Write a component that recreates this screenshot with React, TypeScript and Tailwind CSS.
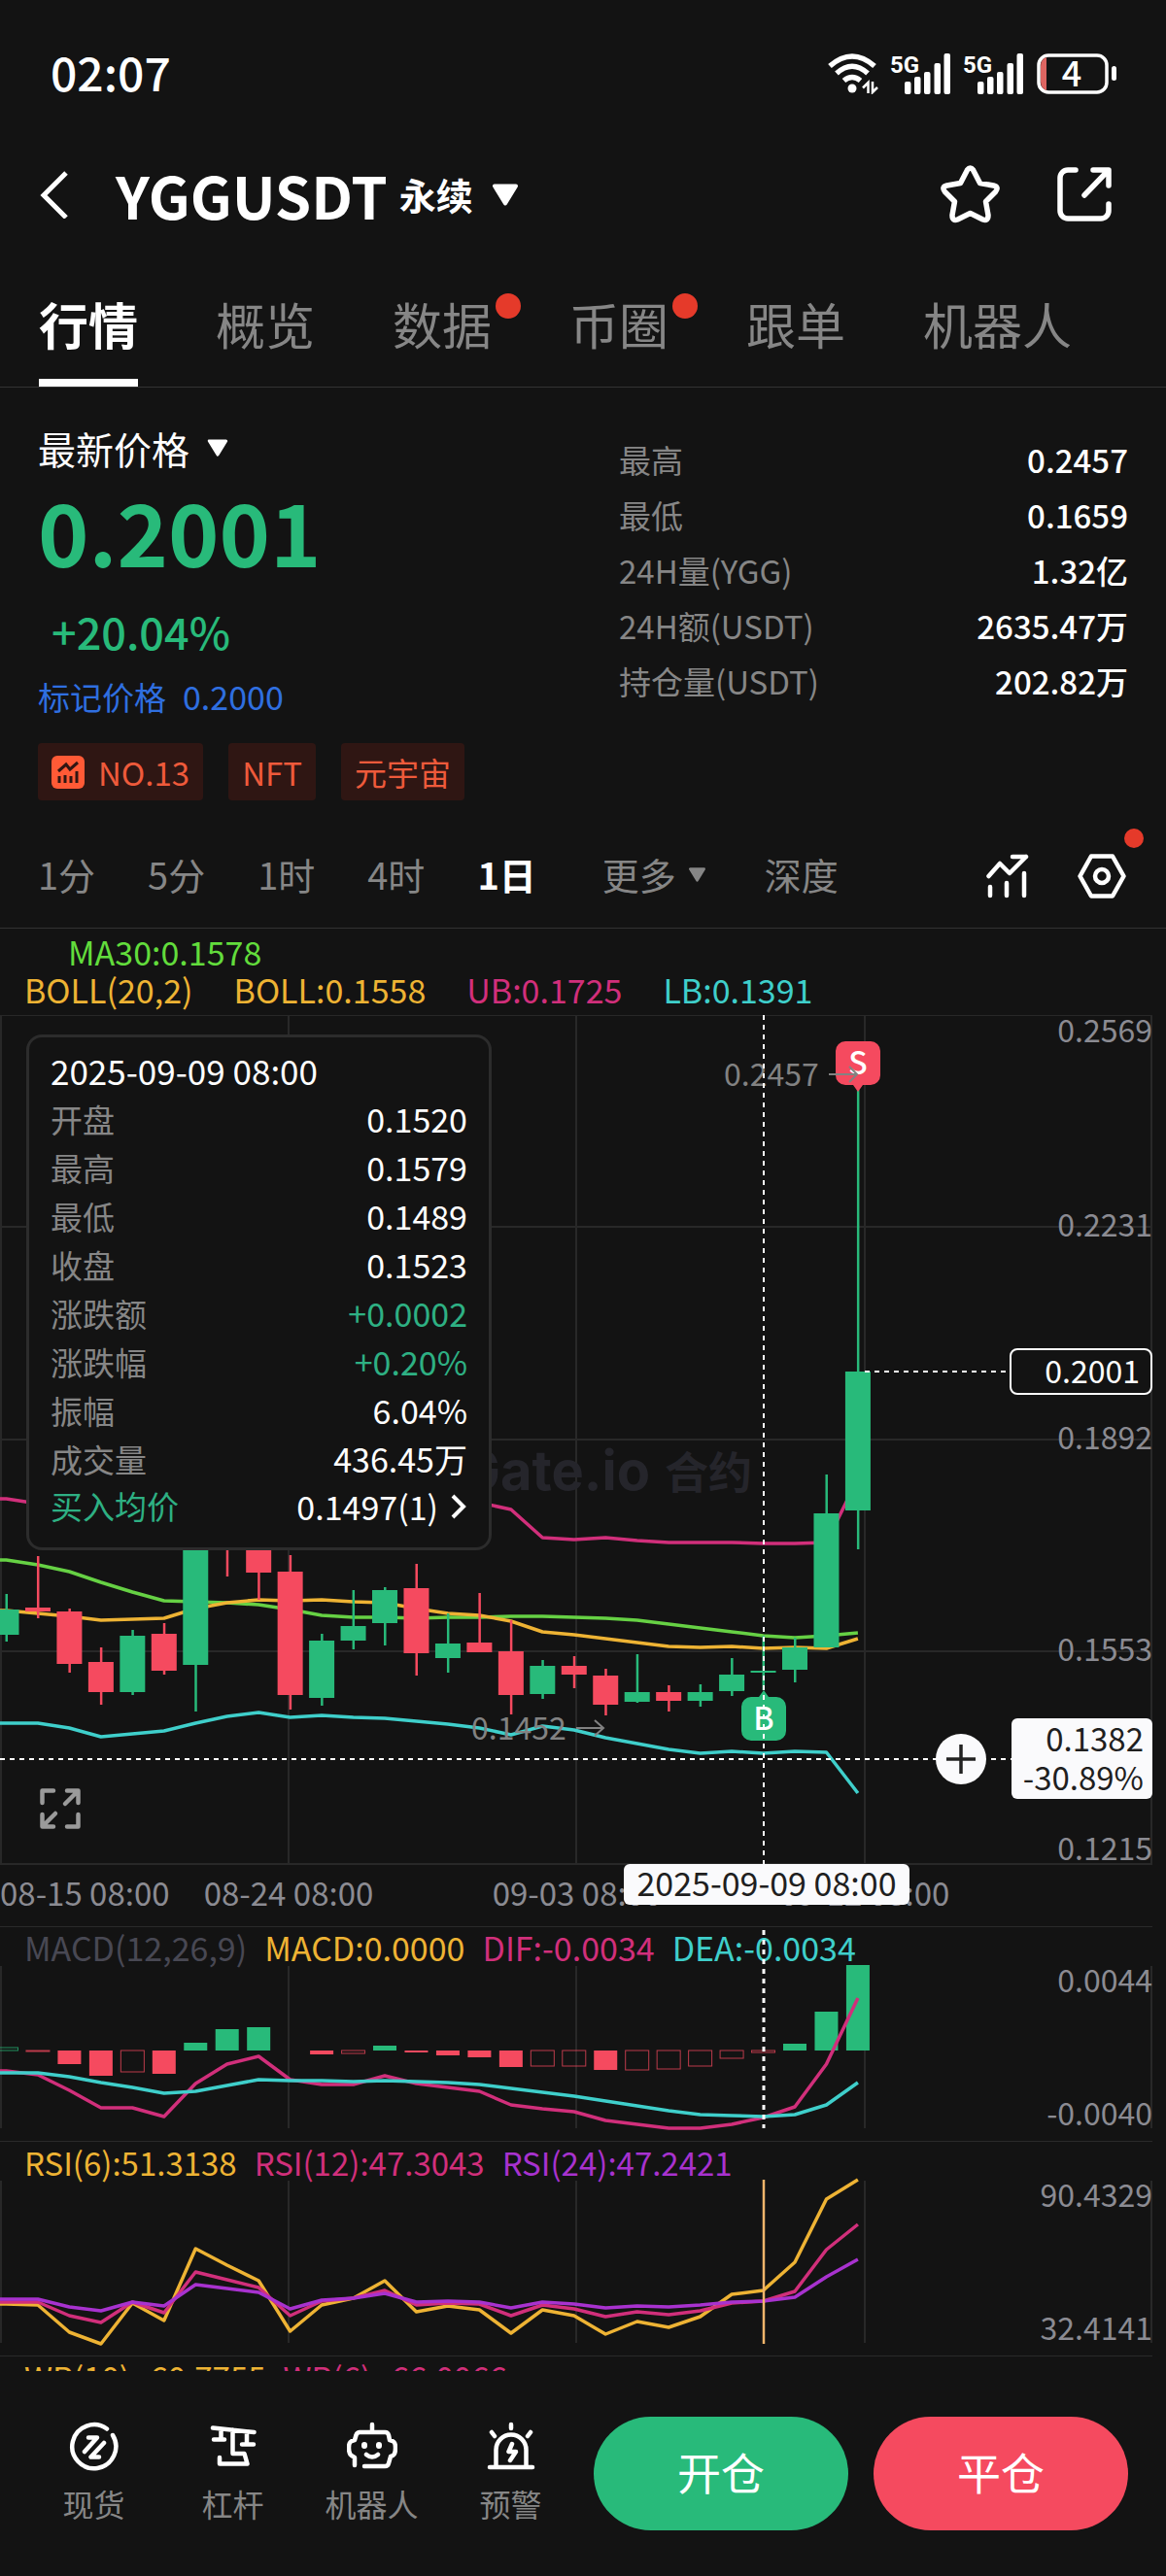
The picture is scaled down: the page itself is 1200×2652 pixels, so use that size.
// src/App.tsx
import type { ReactNode } from 'react'

const GREEN = '#28ba7a'
const RED = '#f54a5f'
const YELLOW = '#eeb334'
const PINK = '#d12f7b'
const CYAN = '#3fcfcb'
const PURPLE = '#a832cf'
const GRID = '#282828'

const tabs = [
  { label: '行情', active: true },
  { label: '概览' },
  { label: '数据', dot: true },
  { label: '币圈', dot: true },
  { label: '跟单' },
  { label: '机器人' },
]

const stats = [
  ['最高', '0.2457'],
  ['最低', '0.1659'],
  ['24H量(YGG)', '1.32亿'],
  ['24H额(USDT)', '2635.47万'],
  ['持仓量(USDT)', '202.82万'],
]

const intervals = ['1分', '5分', '1时', '4时', '1日']

const ohlc = [
  { label: '开盘', value: '0.1520' },
  { label: '最高', value: '0.1579' },
  { label: '最低', value: '0.1489' },
  { label: '收盘', value: '0.1523' },
  { label: '涨跌额', value: '+0.0002', up: true },
  { label: '涨跌幅', value: '+0.20%', up: true },
  { label: '振幅', value: '6.04%' },
  { label: '成交量', value: '436.45万' },
]

// body top, body bottom, high, low, rising
const candles: [number, number, number, number, boolean][] = [
  [612, 638, 596, 645, true],
  [610, 614, 557, 621, false],
  [614, 668, 611, 677, false],
  [666, 697, 651, 710, false],
  [639, 697, 633, 700, true],
  [637, 675, 626, 679, false],
  [520, 669, 500, 717, true],
  [515, 540, 500, 578, false],
  [530, 574, 520, 602, false],
  [573, 700, 556, 715, false],
  [644, 703, 637, 711, true],
  [629, 644, 592, 653, true],
  [592, 626, 589, 649, true],
  [590, 657, 565, 680, false],
  [647, 662, 616, 677, true],
  [646, 656, 595, 656, false],
  [655, 700, 623, 720, false],
  [670, 699, 664, 704, true],
  [670, 679, 660, 693, false],
  [680, 710, 673, 721, false],
  [697, 707, 658, 708, true],
  [697, 706, 690, 717, false],
  [697, 706, 689, 712, true],
  [679, 696, 662, 701, true],
  [675, 677, 639, 695, true],
  [651, 674, 641, 687, true],
  [513, 651, 473, 651, true],
  [367, 510, 77, 550, true],
]

const upperBand = [498, 503, 505, 505, 505, 505, 505, 505, 505, 505, 505, 505, 505, 505, 505, 502, 509, 538, 540, 538, 541, 543, 543, 543, 544, 544, 543, 477]
const ma30 = [561, 566, 573, 584, 594, 603, 604, 605, 607, 612, 618, 620, 620, 621, 620, 620, 619, 619, 620, 621, 623, 627, 631, 635, 639, 641, 639, 636]
const middleBand = [613, 616, 619, 623, 622, 621, 611, 605, 602, 603, 602, 604, 605, 611, 616, 618, 624, 635, 638, 642, 646, 650, 651, 650, 652, 651, 652, 642]
const lowerBand = [729, 729, 734, 743, 740, 737, 729, 722, 718, 723, 721, 723, 724, 727, 730, 734, 741, 732, 736, 744, 750, 756, 760, 758, 760, 758, 759, 801]

// signed bar height from the zero line, hollow when the histogram shrinks
const macdBars: [number, boolean][] = [
  [3, true], [-1, true], [-14, false], [-26, false], [-22, true], [-24, false], [8, false],
  [22, false], [24, false], [0, false], [-4, false], [-3, true], [5, false], [-2, false],
  [-5, false], [-7, false], [-17, false], [-16, true], [-16, true], [-20, false], [-20, true],
  [-19, true], [-16, true], [-8, true], [-2, true], [7, false], [40, false], [88, false],
]
const dif = [148, 152, 168, 186, 186, 195, 161, 141, 133, 157, 162, 162, 153, 161, 165, 169, 183, 187, 190, 199, 203, 207, 207, 203, 196, 185, 141, 73]
const dea = [150, 150, 154, 160, 165, 171, 169, 163, 157, 158, 158, 159, 158, 159, 160, 162, 166, 170, 174, 179, 184, 189, 193, 194, 195, 193, 183, 160]

const rsi6 = [167, 168, 196, 208, 166, 184, 110, 127, 143, 195, 168, 161, 143, 175, 169, 173, 197, 173, 179, 198, 185, 191, 180, 157, 153, 124, 59, 39]
const rsi12 = [165, 165, 179, 186, 165, 176, 134, 142, 150, 179, 164, 161, 153, 168, 166, 167, 179, 168, 172, 180, 175, 178, 174, 166, 164, 154, 111, 85]
const rsi24 = [162, 162, 170, 174, 165, 169, 147, 151, 155, 172, 163, 161, 156, 165, 164, 165, 171, 165, 167, 171, 169, 170, 168, 165, 164, 160, 139, 121]

const xAt = (i: number) => 6.5 + i * 32.46
const CROSS_X = 786

const toPath = (ys: number[]) =>
  `M0 ${ys[0]}` + ys.map((y, i) => `L${xAt(i).toFixed(1)} ${y}`).join('')

function Series({ ys, color }: { ys: number[]; color: string }) {
  return <path d={toPath(ys)} fill="none" stroke={color} strokeWidth="3.5" strokeLinejoin="round" />
}

function Caret({ className }: { className: string }) {
  return (
    <svg viewBox="0 0 28 23" className={className} aria-hidden="true">
      <path d="M3 2.5H25L14 20.5Z" fill="currentColor" stroke="currentColor" strokeWidth="4" strokeLinejoin="round" />
    </svg>
  )
}

function Signal() {
  return (
    <svg viewBox="0 0 62 42" className="h-[42px] w-[62px] overflow-visible" fill="#fff" aria-hidden="true">
      <text x="-1" y="20" fontSize="24" fontWeight="700" fontFamily="Roboto, sans-serif">5G</text>
      <rect x="14" y="29" width="6.5" height="13" rx="2" />
      <rect x="24" y="24" width="6.5" height="18" rx="2" />
      <rect x="34" y="19" width="6.5" height="23" rx="2" />
      <rect x="44.5" y="10" width="6.5" height="32" rx="2" />
      <rect x="54.5" y="0" width="6.5" height="42" rx="2" />
    </svg>
  )
}

function StatusBar() {
  return (
    <div className="flex h-[116px] items-center justify-between pt-9 pr-[50px] pl-[52px]">
      <span className="pb-1.5 text-[48px] leading-[48px] font-medium">02:07</span>
      <div className="flex items-center gap-[13px]">
        <svg viewBox="0 0 52 42" className="h-[42px] w-[52px]" fill="none" stroke="#fff" strokeWidth="5.5" aria-hidden="true">
          <path d="M2 13Q25-7 48 13M9 20.500Q25 6 41 20.500M16.500 28Q25 21 33.500 28" />
          <circle cx="25" cy="36" r="4.5" fill="#fff" stroke="none" />
          <path d="M41.500 41V30L36 35.500M46 29V40L51 35" strokeWidth="2.5" />
        </svg>
        <Signal />
        <Signal />
        <svg viewBox="0 0 83 42" className="h-[42px] w-[83px] overflow-visible" aria-hidden="true">
          <rect x="2" y="2" width="70" height="38" rx="10" fill="none" stroke="#fff" strokeWidth="3.5" />
          <path d="M10 4V38Q4 36 4 29V13Q4 6 10 4Z" fill="#dd6561" />
          <rect x="77" y="13" width="5" height="15" rx="2.5" fill="#fff" />
          <text x="36" y="34" fontSize="36" fontWeight="500" fill="#fff" textAnchor="middle">4</text>
        </svg>
      </div>
    </div>
  )
}

function Header() {
  return (
    <header className="flex h-[168px] items-center pr-14 pl-10">
      <button type="button" aria-label="返回" className="mr-[49px]">
        <svg viewBox="0 0 30 50" className="h-[50px] w-[30px]" fill="none" stroke="#fff" strokeWidth="5">
          <path d="M28 3 5 26 28 49" />
        </svg>
      </button>
      <button type="button" className="flex items-center">
        <h1 className="text-[60px] leading-[60px] font-bold">YGGUSDT</h1>
        <span className="ml-3 text-[38px] leading-[48px] font-bold">永续</span>
        <Caret className="ml-[19px] h-[23px] w-7" />
      </button>
      <div className="ml-auto flex items-center gap-[59px]">
        <button type="button" aria-label="收藏">
          <svg viewBox="0 0 61 60" className="h-[60px] w-[61px]" fill="none" stroke="#fff" strokeWidth="5.5" strokeLinejoin="round">
            <path d="M27.500 5Q30.500 1 33.500 5L40.500 18.500 54.500 21Q60.500 22.500 56.500 27.500L46.500 37.500 49 51.500Q49 58 43.500 56L30.500 49.500 17.500 56Q12 58 12 51.500L14.500 37.500 4.500 27.500Q.5 22.500 6.500 21L20.500 18.500Z" />
          </svg>
        </button>
        <button type="button" aria-label="分享">
          <svg viewBox="0 0 56 56" className="size-14" fill="none" stroke="#fff" strokeWidth="5.5" strokeLinecap="round" strokeLinejoin="round">
            <path d="M19 3H11a8 8 0 0 0-8 8V45a8 8 0 0 0 8 8H45a8 8 0 0 0 8-8V38" />
            <path d="M37 3H53V19M52 4 28 29" />
          </svg>
        </button>
      </div>
    </header>
  )
}

function Tabs() {
  return (
    <nav className="flex h-[115px] gap-20 border-b border-[#333] px-10" aria-label="页面">
      {tabs.map((tab) => (
        <a
          key={tab.label}
          href="#"
          className={`relative flex items-center pb-4 text-[51px] leading-[60px] ${
            tab.active ? 'font-bold text-white' : 'text-[#868686]'
          }`}
        >
          {tab.label}
          {tab.active && <span className="absolute inset-x-0 bottom-0 h-2 bg-white" />}
          {tab.dot && <span className="absolute top-[18px] -right-[30px] size-[26px] rounded-full bg-[#e53a2a]" />}
        </a>
      ))}
    </nav>
  )
}

function Tag({ children }: { children: ReactNode }) {
  return (
    <a href="#" className="flex h-[59px] items-center gap-3.5 rounded bg-[#2f1613] px-3.5 text-[33px] leading-10 text-[#ee5a3b]">
      {children}
    </a>
  )
}

function Overview() {
  return (
    <section className="grid grid-cols-2 gap-[74px] px-[39px] pb-[21px]">
      <div className="pt-[38px]">
        <button type="button" className="flex items-center gap-[18px] text-[39px] leading-[48px]">
          最新价格
          <Caret className="h-[18px] w-[22px]" />
        </button>
        <p className="mt-4 text-[89px] leading-[90px] font-bold text-[#28ba7a]">0.2001</p>
        <p className="mt-[35px] pl-3.5 text-[45px] leading-[48px] font-medium text-[#28ba7a]">+20.04%</p>
        <p className="mt-[23px] flex gap-[17px] text-[33px] leading-10 text-[#2f6fe0]">
          <span>标记价格</span>
          <span className="text-[34px]">0.2000</span>
        </p>
        <div className="mt-7 flex gap-[26px]">
          <Tag>
            <svg viewBox="0 0 34 34" className="size-[34px]" fill="none" stroke="#2f1613" strokeWidth="3">
              <rect width="34" height="34" rx="6" fill="#ff5a36" stroke="none" />
              <path d="M7 16 15 9 19 14 27 7M8 21V28M14 20V28M20 21V28M26 16V28" />
            </svg>
            NO.13
          </Tag>
          <Tag>NFT</Tag>
          <Tag>元宇宙</Tag>
        </div>
      </div>
      <dl className="pt-[46px] text-[33px] leading-[57px]">
        {stats.map(([label, value]) => (
          <div key={label} className="flex justify-between">
            <dt className="text-[#868686]">{label}</dt>
            <dd className="font-medium">{value}</dd>
          </div>
        ))}
      </dl>
    </section>
  )
}

function Intervals() {
  return (
    <div className="flex h-[111px] items-center border-b border-[#333] pr-[41px] pl-[39px] text-[38px] leading-[48px] text-[#868686]">
      <div className="flex gap-[54px]">
        {intervals.map((label) => (
          <button key={label} type="button" className={label === '1日' ? 'font-bold text-white' : ''}>
            {label}
          </button>
        ))}
      </div>
      <button type="button" aria-haspopup="menu" className="ml-[68px] flex items-center gap-3">
        更多
        <Caret className="h-[15px] w-[19px]" />
      </button>
      <button type="button" className="ml-[60px]">深度</button>
      <div className="ml-auto flex items-center gap-[50px] pt-1">
        <button type="button" aria-label="指标">
          <svg viewBox="0 0 44 46" className="h-[46px] w-11" fill="none" stroke="#fff" strokeWidth="4.5" strokeLinecap="round" strokeLinejoin="round">
            <path d="M2.500 23 14 10 24 20 41 3M27 3H41M4 34V43M21 30V43M39 20V43" />
          </svg>
        </button>
        <button type="button" aria-label="设置" className="relative">
          <svg viewBox="0 0 50 46" className="h-[46px] w-[50px]" fill="none" stroke="#fff" strokeWidth="4.5" strokeLinejoin="round">
            <path d="M14 2.500H36L47.500 23 36 43.500H14L2.500 23Z" />
            <circle cx="25" cy="23" r="7" />
          </svg>
          <span className="absolute -top-[26px] -right-[18px] size-5 rounded-full bg-[#e53a2a]" />
        </button>
      </div>
    </div>
  )
}

function CandleTooltip() {
  return (
    <div className="absolute top-5 left-[27px] w-[479px] rounded-2xl border-[3px] border-[#2c2c2c] bg-[#131313] px-[22px] pt-[9px] pb-[19px] text-[33px] leading-[50px]">
      <p className="text-[35px]">2025-09-09 08:00</p>
      <dl>
        {ohlc.map((row) => (
          <div key={row.label} className="flex justify-between">
            <dt className="text-[#868686]">{row.label}</dt>
            <dd className={row.up ? 'text-[34px] text-[#2eb083]' : 'text-[34px]'}>{row.value}</dd>
          </div>
        ))}
      </dl>
      <a href="#" className="flex justify-between leading-[47px]">
        <span className="text-[#2eb083]">买入均价</span>
        <span className="flex items-center gap-3 text-[34px]">
          0.1497(1)
          <svg viewBox="0 0 18 26" className="h-[26px] w-[18px]" fill="none" stroke="#fff" strokeWidth="4" aria-hidden="true">
            <path d="M3 2 14 13 3 24" />
          </svg>
        </span>
      </a>
    </div>
  )
}

function PriceChart() {
  return (
    <section className="relative mr-3.5 border-b border-[#2a2a2a]" aria-label="K线">
      <div className="pt-1 pb-[7px] pl-[25px] text-[34px] leading-[39px]">
        <p className="pl-[45px] text-[#62dc3c]">MA30:0.1578</p>
        <p className="flex gap-[42px]">
          <span className="text-[#eeb334]">BOLL(20,2)</span>
          <span className="text-[#eeb334]">BOLL:0.1558</span>
          <span className="text-[#d12f7b]">UB:0.1725</span>
          <span className="text-[#3fcfcb]">LB:0.1391</span>
        </p>
      </div>
      <div className="relative">
        <svg viewBox="0 0 1186 938" className="block h-auto w-full">
          <g stroke={GRID} strokeWidth="2">
            {[0, 218, 437, 655, 874].map((y) => (
              <path key={y} d={`M0 ${y}H1186`} />
            ))}
            {[1, 297, 593, 890, 1185].map((x) => (
              <path key={x} d={`M${x} 0V874`} />
            ))}
          </g>

          <g fill="#25252b" fontWeight="700">
            <text x="473" y="489" fontSize="56" fontFamily="Inter, sans-serif">Gate.io</text>
            <text x="684" y="488" fontSize="45">合约</text>
          </g>

          <Series ys={upperBand} color={PINK} />
          <Series ys={ma30} color="#66d144" />
          <Series ys={middleBand} color={YELLOW} />
          <Series ys={lowerBand} color={CYAN} />

          {candles.map(([top, bottom, high, low, up], i) => (
            <g key={i} fill={up ? GREEN : RED}>
              <rect x={xAt(i) - 1} y={high} width="2.5" height={low - high} />
              <rect x={xAt(i) - 13} y={top} width="26" height={bottom - top} />
            </g>
          ))}

          <g fill="#8b8b92" fontSize="32" textAnchor="end">
            <text x="1186" y="28">0.2569</text>
            <text x="1186" y="228">0.2231</text>
            <text x="1186" y="447">0.1892</text>
            <text x="1186" y="665">0.1553</text>
            <text x="1186" y="870">0.1215</text>
          </g>
          <g fill="#8b8b92" fontSize="33" textAnchor="middle">
            <text x="0" y="917" textAnchor="start">08-15 08:00</text>
            <text x="297" y="917">08-24 08:00</text>
            <text x="594" y="917">09-03 08:00</text>
            <text x="890" y="917">09-12 08:00</text>
          </g>

          <path d="M870 27h26a10 10 0 0 1 10 10v25a10 10 0 0 1-10 10h-8l-5 7-5-7h-8a10 10 0 0 1-10-10V37a10 10 0 0 1 10-10Z" fill={RED} />
          <path d="M773 747h26a10 10 0 0 0 10-10v-25a10 10 0 0 0-10-10h-8l-5-7-5 7h-8a10 10 0 0 0-10 10v25a10 10 0 0 0 10 10Z" fill={GREEN} />
          <g fill="#fff" fontSize="32" fontWeight="500" textAnchor="middle">
            <text x="883" y="61">S</text>
            <text x="786" y="736">B</text>
          </g>

          <g fill="#828282" fontSize="32">
            <text x="745" y="73">0.2457</text>
            <text x="485" y="746">0.1452</text>
          </g>
          <g fill="none" stroke="#828282" strokeWidth="2">
            <path d="M853 61H881M874 53 882 61 874 69" />
            <path d="M593 734H620M612 726 621 734 612 742" />
          </g>

          <g stroke="#fff" strokeWidth="2" strokeDasharray="5 5">
            <path d="M890 367H1038" />
            <path d={`M${CROSS_X} 0V874`} />
            <path d="M0 766H1041" />
          </g>

          <rect x="1040" y="344" width="145" height="46" rx="7" fill="#131313" stroke="#fff" strokeWidth="2" />
          <rect x="1041" y="724" width="145" height="83" rx="6" fill="#fafafc" />
          <circle cx="989" cy="766" r="26" fill="#fafafc" />
          <path d="M974 766H1004M989 751V781" stroke="#222" strokeWidth="3.5" />
          <rect x="642" y="874" width="294" height="42" rx="6" fill="#fafafc" />
          <text x="1173" y="379" fontSize="32" fill="#fff" textAnchor="end">0.2001</text>
          <g fill="#1f1f1f" fontSize="33" textAnchor="end">
            <text x="1177" y="758">0.1382</text>
            <text x="1177" y="798">-30.89%</text>
            <text x="789" y="907" fontSize="34" textAnchor="middle">2025-09-09 08:00</text>
          </g>
        </svg>
        <CandleTooltip />
        <button type="button" aria-label="全屏" className="absolute bottom-[99px] left-10">
          <svg viewBox="0 0 44 44" className="size-11" fill="none" stroke="#9a9a9a" strokeWidth="4.5" strokeLinecap="round" strokeLinejoin="round">
            <path d="M3.500 16V3.500H15M29 3.500H40.500V16M39 5 27 17M40.500 28V40.500H29M15 40.500H3.500V28M5 39 17 27" />
          </svg>
        </button>
      </div>
    </section>
  )
}

function Legend({ items, className = 'text-[33px]' }: { items: [string, string][]; className?: string }) {
  return (
    <p className={`absolute top-px left-[25px] flex gap-[18px] leading-10 whitespace-nowrap ${className}`}>
      {items.map(([text, color]) => (
        <span key={text} style={{ color }}>{text}</span>
      ))}
    </p>
  )
}

function Pane({ max, min, children }: { max: string; min: string; children: ReactNode }) {
  return (
    <svg viewBox="0 0 1186 220" className="relative block h-auto w-full">
      <g stroke={GRID} strokeWidth="2">
        {[1, 297, 593, 890, 1185].map((x) => (
          <path key={x} d={`M${x} 40V207`} />
        ))}
      </g>
      {children}
      <g fill="#8b8b92" fontSize="32" textAnchor="end">
        <text x="1186" y="67">{max}</text>
        <text x="1186" y="204">{min}</text>
      </g>
    </svg>
  )
}

function MacdPane() {
  return (
    <section className="relative mr-3.5 border-b border-[#2a2a2a]" aria-label="MACD">
      <Legend
        className="text-[34px]"
        items={[
          ['MACD(12,26,9)', '#484853'],
          ['MACD:0.0000', YELLOW],
          ['DIF:-0.0034', PINK],
          ['DEA:-0.0034', CYAN],
        ]}
      />
      <Pane max="0.0044" min="-0.0040">
        {macdBars.map(([value, hollow], i) => {
          const color = value > 0 ? GREEN : RED
          const y = value > 0 ? 127 - value : 127
          return hollow ? (
            <rect key={i} x={xAt(i) - 12} y={y} width="24" height={Math.abs(value)} fill="none" stroke={color} strokeOpacity="0.75" />
          ) : (
            <rect key={i} x={xAt(i) - 12} y={y} width="24" height={Math.abs(value)} fill={color} />
          )
        })}
        <Series ys={dif} color={PINK} />
        <Series ys={dea} color={CYAN} />
        <path d={`M${CROSS_X} 3V207`} stroke="#fff" strokeWidth="3" strokeDasharray="5 5" />
      </Pane>
    </section>
  )
}

function RsiPane() {
  return (
    <section className="relative mr-3.5 border-b border-[#2a2a2a]" aria-label="RSI">
      <Legend
        items={[
          ['RSI(6):51.3138', YELLOW],
          ['RSI(12):47.3043', PINK],
          ['RSI(24):47.2421', PURPLE],
        ]}
      />
      <Pane max="90.4329" min="32.4141">
        <Series ys={rsi6} color={YELLOW} />
        <Series ys={rsi12} color={PINK} />
        <Series ys={rsi24} color={PURPLE} />
        <path d={`M${CROSS_X} 39V208`} stroke="#f2b56b" strokeWidth="2.5" />
      </Pane>
    </section>
  )
}

const shortcuts = [
  {
    label: '现货',
    icon: <path d="M39 7.500A22.500 22.500 0 1 0 45 14M20 16.500H29L16 31M36 22 22.500 36.500H31" />,
  },
  {
    label: '杠杆',
    icon: <path d="M5 6.500 47.500 11M25.500 8.500V33H37.500L40.500 43.500H12V37M13.500 8V18.500M6 18.500H17M40 11V23.500M35 23.500H47" />,
  },
  {
    label: '机器人',
    icon: (
      <>
        <path d="M8 45V37C4 35 2 34 2 27C2 21 4 20 8 19L9.500 14A4 4 0 0 1 13 11H39A4 4 0 0 1 43 14L44 19C48 20 50 21 50 27C50 34 48 35 45 36L43 43A4 4 0 0 1 39 46H18M26 3V11M20 34Q26 39 32 34" />
        <path d="M18 24V25M33 24V25" strokeWidth="6" />
      </>
    ),
  },
  {
    label: '预警',
    icon: <path d="M10.500 46V29A15.500 15.500 0 0 1 41.500 29V46M4 47H48M26 3V7M6 11 9 15M46 11 43 15M27 23 23.500 31H31L25 40" />,
  },
]

function BottomBar() {
  return (
    <footer className="flex items-center gap-3.5 py-[47px] pr-[39px] pl-[25px]">
      <nav className="flex pb-1" aria-label="快捷入口">
        {shortcuts.map((item) => (
          <a key={item.label} href="#" className="flex w-[143px] flex-col items-center gap-3 text-[32px] leading-10 text-[#868686]">
            <svg viewBox="0 0 52 52" className="size-[52px]" fill="none" stroke="#fff" strokeWidth="4.5" strokeLinecap="round" strokeLinejoin="round" aria-hidden="true">
              {item.icon}
            </svg>
            {item.label}
          </a>
        ))}
      </nav>
      <div className="flex flex-1 gap-[26px] text-[45px] leading-[56px]">
        <button type="button" className="h-[117px] flex-1 rounded-full bg-[#28ba7a] pb-1">开仓</button>
        <button type="button" className="h-[117px] flex-1 rounded-full bg-[#f54a5f] pb-1">平仓</button>
      </div>
    </footer>
  )
}

export default function App() {
  return (
    <main className="min-h-screen bg-[#131313] font-['Noto_Sans_CJK_SC',sans-serif] text-white">
      <StatusBar />
      <Header />
      <Tabs />
      <Overview />
      <Intervals />
      <PriceChart />
      <MacdPane />
      <RsiPane />
      <div className="relative h-[15px] overflow-hidden">
        <Legend
          items={[
            ['WR(10):-60.7755', YELLOW],
            ['WR(6):-66.0066', PINK],
          ]}
        />
      </div>
      <BottomBar />
    </main>
  )
}
